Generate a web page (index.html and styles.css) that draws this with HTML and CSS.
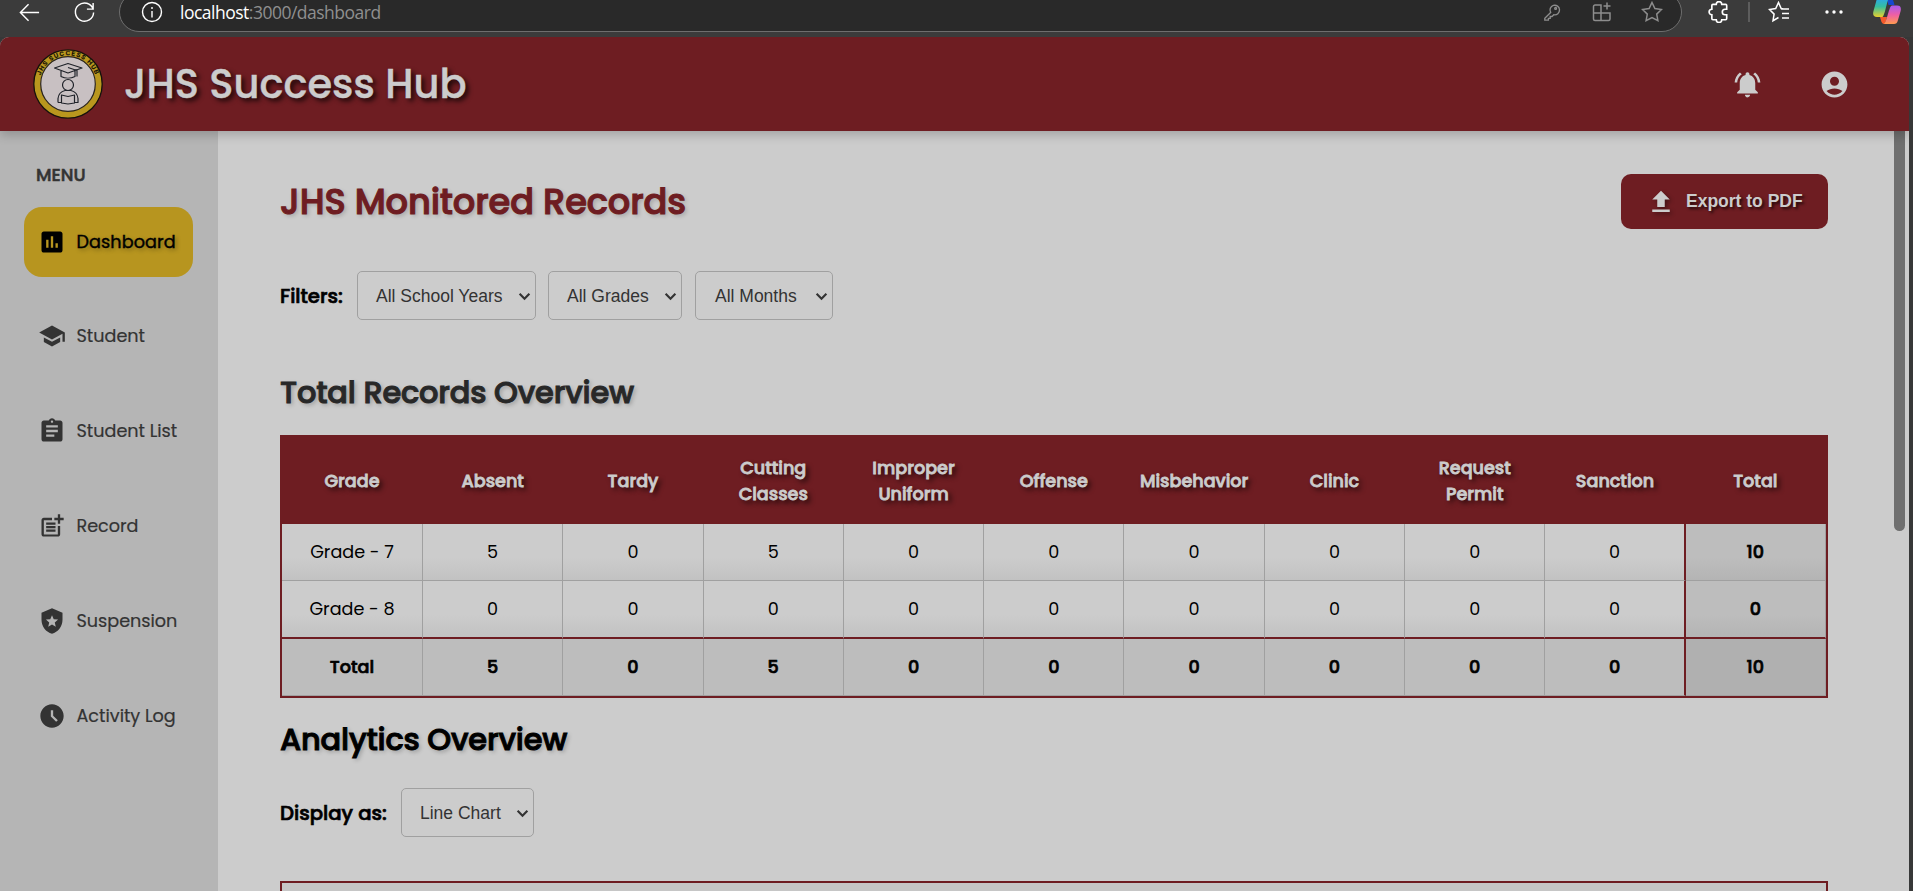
FILE: index.html
```html
<!DOCTYPE html>
<html lang="en">
<head>
<meta charset="utf-8">
<title>JHS Success Hub</title>
<link rel="stylesheet" href="styles.css">
</head>
<body>
<div class="browser-bar">
  <svg class="bi back" viewBox="0 0 24 24"><path d="M22 12H3M11 3.500L2.500 12l8.500 8.500"/></svg>
  <svg class="bi reload" viewBox="0 0 24 24"><path d="M21 8.500A9.500 9.500 0 1 0 21.500 12M21 2v6.500h-6.500"/></svg>
  <div class="address">
    <svg class="bi info" viewBox="0 0 24 24"><circle cx="12" cy="12" r="9.500"/><path d="M12 11v6.500M12 7v2"/></svg>
    <span class="url"><b>localhost</b>:3000/dashboard</span>
    <svg class="bi dim key" viewBox="0 0 20 20"><path d="M8.500 10.500L2 17v2h4v-2h2v-2h2l2-2a5.300 5.300 0 1 0-3.500-2.500z"/><circle cx="14" cy="6" r="1"/></svg>
    <svg class="bi dim apps" viewBox="0 0 20 20"><path d="M9 18.500V3H3a1.500 1.500 0 0 0-1.500 1.500V17A1.500 1.500 0 0 0 3 18.500h13.500A1.500 1.500 0 0 0 18 17v-6H1.500M15 .5v7M11.500 4h7"/></svg>
    <svg class="bi dim star" viewBox="0 0 22 22"><path d="M11 1.500l2.900 6.100 6.600.9-4.800 4.600 1.200 6.600L11 16.500l-5.900 3.200 1.200-6.600L1.500 8.500l6.600-.9z"/></svg>
  </div>
  <svg class="bi puzzle" viewBox="0 0 20 20"><path d="M4.500 3h3a2.500 2.500 0 0 1 5 0H16a1 1 0 0 1 1 1v3.500h-1.500a2.500 2.500 0 0 0 0 5H17V16a1 1 0 0 1-1 1h-3.500a2.500 2.500 0 0 1-5 0h-3a1 1 0 0 1-1-1v-3.500a2.500 2.500 0 0 1 0-5V4a1 1 0 0 1 1-1z"/></svg>
  <i class="bar-divider"></i>
  <svg class="bi favs" viewBox="0 0 22 22"><path d="M15.500 8L13.200 7.600 10.500 1.500 7.700 7.600l-6.200.9 4.600 4.600L5 19.700l5.500-3.200M13 8h8M14 12.500h7M14 17h7"/></svg>
  <svg class="dots" viewBox="0 0 18 4"><circle cx="2" cy="2" r="1.700"/><circle cx="9" cy="2" r="1.700"/><circle cx="16" cy="2" r="1.700"/></svg>
  <svg class="copilot" viewBox="0 0 28 26">
    <defs>
      <linearGradient id="cpA" x1="0" y1="0" x2="0" y2="1"><stop offset="0" stop-color="#2aa5ee"/><stop offset=".45" stop-color="#35bfa0"/><stop offset="1" stop-color="#e8d02c"/></linearGradient>
      <linearGradient id="cpB" x1="0" y1="0" x2="0" y2="1"><stop offset="0" stop-color="#a75bf0"/><stop offset=".5" stop-color="#ee5fa5"/><stop offset="1" stop-color="#ff9a50"/></linearGradient>
    </defs>
    <path d="M14 0h4c2 0 2.500 2 3.500 6h-6z" fill="#1747cf"/>
    <path d="M7 18h7l-2 7H11c-2.500 0-3-4-4-7z" fill="#f45a2c"/>
    <path d="M5-1h11c-2 2-4 17-6.500 19H4c-3.500 0-4.500-2-3.500-6L3 3C3.500 1 4-1 5-1z" fill="url(#cpA)"/>
    <path d="M19 6.500h5c3.500 0 4.500 2 3.500 6L25 21c-.8 3-2 4-4 4H11c3-2 5-18.500 8-18.500z" fill="url(#cpB)"/>
  </svg>
</div>

<div class="window">
  <header class="app-header">
    <svg class="logo" viewBox="0 0 70 70">
      <defs><path id="ring" d="M6.400 35a28.600 28.600 0 0 1 57.200 0"/></defs>
      <circle cx="35" cy="35" r="34.200" class="logo-gold"/>
      <circle cx="35" cy="35" r="27.300" class="logo-face"/>
      <text class="logo-text"><textPath href="#ring" startOffset="50%" text-anchor="middle">JHS SUCCESS HUB</textPath></text>
      <g class="logo-line">
        <path d="M21.500 19L35 14.500 49 19l-14 5zM28 22v5.500c4 2 10 2 14 0V22M35 18.500l9 3v6"/>
        <circle cx="35" cy="36" r="5.500"/>
        <path d="M25 53.500v-4c.5-4.500 3-7 7-8h6c4 1 6.500 3.500 7 8v4h-3.500M25 53.500h3.500M28.500 46v8l6.500 1 6.500-1v-8L35 47.500z"/>
      </g>
    </svg>
    <h1 class="brand">JHS Success Hub</h1>
    <svg class="hi bell" viewBox="0 0 24 24"><path d="M7.580 4.080 6.150 2.650C3.750 4.480 2.170 7.300 2.030 10.500h2c.15-2.650 1.510-4.970 3.550-6.420m12.390 6.420h2c-.15-3.200-1.730-6.020-4.120-7.850l-1.420 1.430c2.020 1.450 3.390 3.770 3.540 6.420M18 11c0-3.070-1.640-5.640-4.500-6.320V4c0-.83-.67-1.500-1.500-1.500s-1.500.67-1.500 1.500v.68C7.630 5.360 6 7.920 6 11v5l-2 2v1h16v-1l-2-2zm-6 11c.14 0 .27-.01.4-.04.65-.14 1.180-.58 1.440-1.180.1-.24.150-.5.150-.78h-4c.010 1.100.9 2 2.010 2"/></svg>
    <svg class="hi user" viewBox="0 0 24 24"><path d="M12 2C6.480 2 2 6.480 2 12s4.480 10 10 10 10-4.480 10-10S17.520 2 12 2m0 4c1.930 0 3.500 1.570 3.500 3.500S13.930 13 12 13s-3.500-1.570-3.500-3.500S10.070 6 12 6m0 14c-2.030 0-4.430-.82-6.140-2.880C7.550 15.800 9.680 15 12 15s4.450.8 6.140 2.120C16.430 19.180 14.030 20 12 20"/></svg>
  </header>
  <div class="app-body">
    <nav class="sidebar">
      <div class="menu-title">MENU</div>
      <a class="item active"><svg viewBox="0 0 24 24"><path d="M19 3H5c-1.100 0-2 .9-2 2v14c0 1.100.9 2 2 2h14c1.100 0 2-.9 2-2V5c0-1.100-.9-2-2-2M9 17H7v-7h2zm4 0h-2V7h2zm4 0h-2v-4h2z"/></svg><span>Dashboard</span></a>
      <a class="item"><svg viewBox="0 0 24 24"><path d="M5 13.180v4L12 21l7-3.820v-4L12 17zM12 3 1 9l11 6 9-4.910V17h2V9z"/></svg><span>Student</span></a>
      <a class="item"><svg viewBox="0 0 24 24"><path d="M19 3h-4.180C14.400 1.840 13.300 1 12 1s-2.400.84-2.820 2H5c-1.100 0-2 .9-2 2v14c0 1.100.9 2 2 2h14c1.100 0 2-.9 2-2V5c0-1.100-.9-2-2-2m-7 0c.55 0 1 .45 1 1s-.45 1-1 1-1-.45-1-1 .45-1 1-1m2 14H7v-2h7zm3-4H7v-2h10zm0-4H7V7h10z"/></svg><span>Student List</span></a>
      <a class="item"><svg viewBox="0 0 24 24"><path d="M17 19.220H5V7h7V5H5c-1.100 0-2 .9-2 2v12c0 1.100.9 2 2 2h12c1.100 0 2-.9 2-2v-7h-2z"/><path d="M19 2h-2v3h-3c.010.010 0 2 0 2h3v2.990c.010.010 2 0 2 0V7h3V5h-3zM7 9h8v2H7zM7 12v2h8v-2zM7 15h8v2H7z"/></svg><span>Record</span></a>
      <a class="item"><svg viewBox="0 0 24 24"><path fill-rule="evenodd" d="M3 5l9-4 9 4v6c0 5.550-3.840 10.740-9 12-5.160-1.260-9-6.450-9-12zM12 7l-1.480 3.460-3.740.32 2.840 2.460-.86 3.660L12 14.960l3.240 1.940-.86-3.660 2.840-2.460-3.740-.32z"/></svg><span>Suspension</span></a>
      <a class="item"><svg viewBox="0 0 24 24"><path d="M12 2C6.500 2 2 6.500 2 12s4.500 10 10 10 10-4.500 10-10S17.500 2 12 2m3.550 15L11 12.500V7h2v4.700l4 4z"/></svg><span>Activity Log</span></a>
    </nav>
    <main class="content">
      <div class="title-row">
        <h2 class="page-title">JHS Monitored Records</h2>
        <button class="export"><svg viewBox="0 0 24 24"><path d="M5 20h14v-2H5zm0-10h4v6h6v-6h4l-7-7z"/></svg><span>Export to PDF</span></button>
      </div>
      <div class="filters">
        <label class="lbl lbl-f">Filters:</label>
        <div class="select s-year"><span>All School Years</span><svg viewBox="0 0 12 8"><path d="M1.500 1.500L6 6l4.500-4.500"/></svg></div>
        <div class="select s-grade"><span>All Grades</span><svg viewBox="0 0 12 8"><path d="M1.500 1.500L6 6l4.500-4.500"/></svg></div>
        <div class="select s-month"><span>All Months</span><svg viewBox="0 0 12 8"><path d="M1.500 1.500L6 6l4.500-4.500"/></svg></div>
      </div>
      <h3 class="section records">Total Records Overview</h3>
      <table class="grid">
        <thead><tr><th>Grade</th><th>Absent</th><th>Tardy</th><th>Cutting Classes</th><th>Improper Uniform</th><th>Offense</th><th>Misbehavior</th><th>Clinic</th><th>Request Permit</th><th>Sanction</th><th>Total</th></tr></thead>
        <tbody>
          <tr><td>Grade - 7</td><td>5</td><td>0</td><td>5</td><td>0</td><td>0</td><td>0</td><td>0</td><td>0</td><td>0</td><td>10</td></tr>
          <tr><td>Grade - 8</td><td>0</td><td>0</td><td>0</td><td>0</td><td>0</td><td>0</td><td>0</td><td>0</td><td>0</td><td>0</td></tr>
          <tr class="sum"><td>Total</td><td>5</td><td>0</td><td>5</td><td>0</td><td>0</td><td>0</td><td>0</td><td>0</td><td>0</td><td>10</td></tr>
        </tbody>
      </table>
      <h3 class="section analytics">Analytics Overview</h3>
      <div class="display">
        <label class="lbl lbl-d">Display as:</label>
        <div class="select s-chart"><span>Line Chart</span><svg viewBox="0 0 12 8"><path d="M1.500 1.500L6 6l4.500-4.500"/></svg></div>
      </div>
      <div class="chart"></div>
    </main>
    <div class="scroll"><i class="thumb"></i></div>
  </div>
</div>
</body>
</html>
```
FILE: styles.css
```css
* { box-sizing: border-box; }

body {
  margin: 0;
  height: 891px;
  overflow: hidden;
  background: #373838;
  color: #000;
  font-family: Poppins, Inter, "Open Sans", sans-serif;
}

h1, h2, h3 { margin: 0; }

/* Browser toolbar */
.browser-bar {
  display: flex;
  align-items: center;
  height: 37px;
  padding: 0 0 13px 18px;
  background: #3b3b3b;
  overflow: hidden;
}
.bi { flex: none; fill: none; stroke: #fff; stroke-width: 1.500; }
.bi.dim { stroke: #8d8d8d; }
.back { width: 23px; height: 23px; }
.reload { width: 23px; height: 23px; margin-left: 32px; }
.address {
  flex: none;
  display: flex;
  align-items: center;
  width: 1563px;
  height: 40px;
  margin-left: 23px;
  padding-left: 20px;
  border: 1px solid #6e6e6e;
  border-radius: 20px;
  background: #292929;
}
.info { width: 24px; height: 24px; stroke-width: 1.400; }
.url {
  flex: none;
  width: 1363px;
  margin-left: 16px;
  padding-bottom: 1px;
  color: #8f8f8f;
  font: 17.500px "Open Sans", sans-serif;
  letter-spacing: -.5px;
}
.url b { color: #fff; font-weight: 400; }
.key { width: 18px; height: 20px; }
.apps { width: 20px; height: 20px; margin-left: 31px; }
.star { width: 22px; height: 22px; margin-left: 29px; }
.puzzle { width: 22px; height: 22px; margin-left: 26px; }
.bar-divider { flex: none; width: 2px; height: 20px; margin-left: 18px; background: #5d5d5d; }
.favs { width: 22px; height: 22px; margin-left: 18px; }
.dots { flex: none; width: 18px; height: 4px; margin-left: 35px; fill: #fff; }
.copilot { flex: none; width: 28px; height: 26px; margin-left: 30px; }

/* Application window */
.window {
  width: 1909px;
  height: 854px;
  border-radius: 9px 9px 0 0;
  background: #ccc;
  overflow: hidden;
}
.app-header {
  display: flex;
  align-items: center;
  position: relative;
  height: 94px;
  padding: 0 59px 0 33px;
  background: #6e1d22;
  box-shadow: 0 4px 10px rgba(0, 0, 0, .2);
}
.logo { width: 70px; height: 70px; }
.logo-gold { fill: #b9971e; stroke: #15120c; stroke-width: 1.300; }
.logo-face { fill: #c8c0c2; stroke: #2b2520; stroke-width: 1.200; }
.logo-text { font: 800 6.300px Inter, sans-serif; letter-spacing: .9px; fill: #1c1606; }
.logo-line { fill: none; stroke: #20232a; stroke-width: 1.200; stroke-linejoin: round; }
.brand {
  margin-left: 21px;
  color: #ccc;
  font-size: 40px;
  font-weight: 500;
  -webkit-text-stroke: .4px;
  text-shadow: 3px 3px 5px rgba(0, 0, 0, .8);
}
.hi { width: 31px; height: 31px; fill: #ccc; }
.bell { margin-left: auto; }
.user { margin-left: 56px; }
.app-body { display: flex; height: 760px; }

/* Sidebar */
.sidebar {
  display: flex;
  flex-direction: column;
  gap: 25px;
  width: 218px;
  padding: 30px 25px 0 24px;
  background: #b5b5b5;
  color: #333;
}
.menu-title {
  height: 28px;
  margin: 0 0 -7px 12px;
  line-height: 28px;
  font-size: 17.600px;
  font-weight: 500;
  -webkit-text-stroke: .5px;
}
.item {
  display: flex;
  align-items: center;
  gap: 10.500px;
  height: 70px;
  padding-left: 14px;
  border-radius: 18px;
  font-size: 17.600px;
  -webkit-text-stroke: .2px;
  white-space: nowrap;
}
.item svg { flex: none; width: 28px; height: 28px; fill: #333; }
.item.active {
  margin-bottom: -1px;
  background: #b7951f;
  color: #000;
  -webkit-text-stroke: .4px;
  text-shadow: 2px 2px 4px rgba(0, 0, 0, .35);
}
.item.active svg { fill: #000; }
.item.active span { letter-spacing: .1px; }

/* Main content */
.content { width: 1676px; padding: 43px 66px 0 62px; }
.title-row { display: flex; justify-content: space-between; height: 55px; }
.page-title {
  line-height: 56px;
  color: #6e1d22;
  font-size: 35.200px;
  font-weight: 500;
  letter-spacing: -.1px;
  -webkit-text-stroke: 1.100px;
  text-shadow: 2px 2px 4px rgba(0, 0, 0, .2);
}
.export {
  display: flex;
  align-items: center;
  gap: 10px;
  width: 207px;
  padding: 0 0 0 25px;
  border: 0;
  border-radius: 10px;
  background: #6e1d22;
  color: #ccc;
  font: 700 17.500px "Liberation Sans", Arial, sans-serif;
  text-shadow: 2px 2px 3px rgba(0, 0, 0, .7);
}
.export svg { flex: none; width: 30px; height: 30px; fill: #ccc; filter: drop-shadow(2px 2px 2px rgba(0, 0, 0, .4)); }
.filters { display: flex; align-items: center; margin-top: 42px; }
.lbl { font-size: 19.700px; font-weight: 500; -webkit-text-stroke: .7px; white-space: nowrap; }
.lbl-f { width: 76px; }
.lbl-d { width: 120px; }
.select {
  display: flex;
  align-items: center;
  justify-content: space-between;
  height: 49px;
  padding: 1px 4px 0 18px;
  border: 1px solid #a0a0a0;
  border-radius: 5px;
  color: #333;
  font: 17.500px "Liberation Sans", Arial, sans-serif;
}
.select svg { width: 13px; height: 9px; fill: none; stroke: #333; stroke-width: 2; }
.s-year { width: 179px; margin-left: 1px; }
.s-grade { width: 134px; margin-left: 12px; }
.s-month { width: 138px; margin-left: 13px; padding-left: 19px; }
.s-chart { width: 133px; margin-left: 1px; }
.section {
  font-size: 30.400px;
  font-weight: 500;
  letter-spacing: -.16px;
  -webkit-text-stroke: 1px;
  text-shadow: 2px 2px 4px rgba(0, 0, 0, .25);
}
.records { height: 48px; margin-top: 49px; line-height: 48px; color: #282828; }
.grid {
  width: 1548px;
  height: 263px;
  margin-top: 18px;
  border: 2px solid #6e1d22;
  border-spacing: 0;
  table-layout: fixed;
  text-align: center;
  font-size: 17.600px;
}
.grid th {
  height: 87px;
  padding: 0 16px 0 15px;
  background: #6e1d22;
  color: #ccc;
  line-height: 26px;
  font-weight: 500;
  -webkit-text-stroke: .8px;
  text-shadow: 3px 3px 5px rgba(0, 0, 0, .8);
}
.grid th:first-child { width: 141px; }
.grid td {
  height: 57px;
  padding: 0;
  border-right: 1px solid #a0a0a0;
  border-bottom: 1px solid #a0a0a0;
  background: linear-gradient(#ccc 60%, #c2c2c2);
}
.grid tr:nth-child(2) td { border-bottom: 2px solid #6e1d22; }
.grid tr td:nth-child(10) { border-right: 2px solid #6e1d22; }
.grid td:last-child { background: linear-gradient(#bdbdbd 60%, #b4b4b4); font-weight: 500; -webkit-text-stroke: .7px; }
.grid .sum td { background: #bdbdbd; font-weight: 500; -webkit-text-stroke: .7px; }
.grid .sum td:last-child { background: #b0b0b0; }
.analytics { height: 48px; margin-top: 18px; line-height: 48px; }
.display { display: flex; align-items: center; margin-top: 24px; }
.chart { height: 100px; margin-top: 44px; border: 2px solid #6e1d22; background: #c6c6c6; }

/* Scrollbar */
.scroll { width: 15px; }
.thumb { display: block; width: 11px; height: 400px; border-radius: 0 0 6px 6px; background: #6f6f6f; }
```
